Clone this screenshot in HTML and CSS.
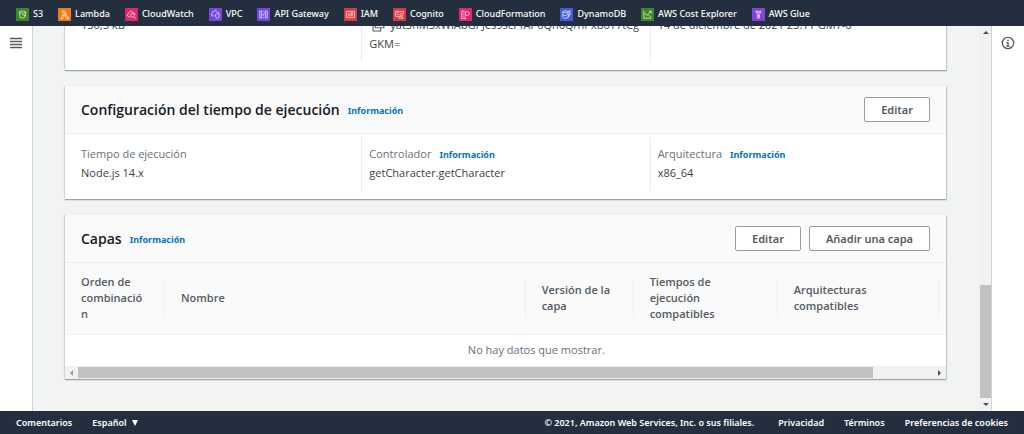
FILE: index.html
```html
<!DOCTYPE html>
<html lang="es">
<head>
<meta charset="utf-8">
<title>Lambda - Configuración</title>
<link rel="stylesheet" href="styles.css">
</head>
<body>
<nav class="topbar" aria-label="Favoritos">
  <a class="fav" href="#"><svg class="fav-icon green" viewBox="0 0 24 24"><path d="M5 7c0-3 14-3 14 0s-14 3-14 0l2 11c1 2 9 2 10 0l2-11M11 12l8 3"/></svg>S3</a>
  <a class="fav" href="#"><svg class="fav-icon orange" viewBox="0 0 24 24"><path d="M7 4h5l6 14h3v3h-5L11 9H8zM9 12l2 4-3 5H4z"/></svg>Lambda</a>
  <a class="fav" href="#"><svg class="fav-icon pink" viewBox="0 0 24 24"><path d="M9 17H6c-4-1-4-6 0-7 0-6 8-7 10-1 3 0 4 2 4 4M18 17l3 4"/><circle cx="14" cy="14" r="4"/></svg>CloudWatch</a>
  <a class="fav" href="#"><svg class="fav-icon purple" viewBox="0 0 24 24"><path d="M9 15H6c-4-1-4-6 0-7 1-6 8-5 10-1 3 0 4 2 4 4M12 12l4-2 4 2c0 5-1 7-4 9-3-2-4-4-4-9z"/></svg>VPC</a>
  <a class="fav" href="#"><svg class="fav-icon purple" viewBox="0 0 24 24"><path d="M4 5l4-1v16l-4-1zM20 5l-4-1v16l4-1zM11 5h2M11 19h2M10 15l4-6"/></svg>API Gateway</a>
  <a class="fav" href="#"><svg class="fav-icon red" viewBox="0 0 24 24"><path d="M3 5h18v14H3zM6 9h4M6 12h4M6 15h12M13 8h4v4h-4z"/></svg>IAM</a>
  <a class="fav" href="#"><svg class="fav-icon red" viewBox="0 0 24 24"><path d="M13 16H3V5h18v5M6 8h5M6 12h4"/><circle cx="16" cy="12" r="3"/><path d="M11 20c0-5 9-5 9 0z"/></svg>Cognito</a>
  <a class="fav" href="#"><svg class="fav-icon pink" viewBox="0 0 24 24"><path d="M10 4H4v17h8v-4M7 8h3M7 12h3M7 16h3M12 6h4c6 0 6 8 0 8h-4z"/></svg>CloudFormation</a>
  <a class="fav" href="#"><svg class="fav-icon blue" viewBox="0 0 24 24"><path d="M4 6c0-3 11-3 11 0s-11 3-11 0v12c0 3 11 3 11 0M4 12c0 2 6 3 9 2M17 4l-3 8h3l-2 7 6-9h-3l2-6z"/></svg>DynamoDB</a>
  <a class="fav" href="#"><svg class="fav-icon green" viewBox="0 0 24 24"><path d="M4 4v16h16M6 8l5 6 4-5 5-4M14 13l6 6M15 5h5v5"/></svg>AWS Cost Explorer</a>
  <a class="fav" href="#"><svg class="fav-icon violet" viewBox="0 0 24 24"><path d="M6 5h12l-4 7v8h-4v-8zM9 8h6M12 12v6"/></svg>AWS Glue</a>
</nav>

<div class="workspace">
  <aside class="rail">
    <button class="icon-button" aria-label="Abrir navegación"><svg viewBox="0 0 14 14"><path d="M1 2.500h12M1 5.500h12M1 8.500h12M1 11.500h12"/></svg></button>
  </aside>
  <main class="content">
    <section class="card">
      <div class="columns">
        <div class="col">130,5 kB</div>
        <div class="col hash"><svg class="copy" viewBox="0 0 12 12"><path d="M3 1h8v7H3zM3 4H1v7h7V8"/></svg>yat5nM5xWiAbGPJes9scPfAP0Qn6Q/nPxb0Y7tCgGKM=</div>
        <div class="col">14 de diciembre de 2021 23:11 GMT-6</div>
      </div>
    </section>

    <section class="card">
      <header class="card-head">
        <h2>Configuración del tiempo de ejecución</h2><a class="info" href="#">Información</a>
        <div class="actions"><button class="btn">Editar</button></div>
      </header>
      <div class="columns">
        <div class="col"><div class="label">Tiempo de ejecución</div><div>Node.js 14.x</div></div>
        <div class="col"><div class="label">Controlador<a class="info" href="#">Información</a></div><div>getCharacter.getCharacter</div></div>
        <div class="col"><div class="label">Arquitectura<a class="info" href="#">Información</a></div><div>x86_64</div></div>
      </div>
    </section>

    <section class="card">
      <header class="card-head">
        <h2>Capas</h2><a class="info" href="#">Información</a>
        <div class="actions"><button class="btn">Editar</button><button class="btn">Añadir una capa</button></div>
      </header>
      <div class="table-wrap">
        <table class="layers">
          <colgroup><col class="c-order"><col><col class="c-version"><col class="c-wide"><col class="c-arch"></colgroup>
          <thead><tr>
            <th><div>Orden de combinación</div></th>
            <th><div>Nombre</div></th>
            <th><div>Versión de la capa</div></th>
            <th><div>Tiempos de ejecución compatibles</div></th>
            <th><div class="arch">Arquitecturas compatibles</div></th>
          </tr></thead>
          <tbody><tr><td colspan="5">No hay datos que mostrar.</td></tr></tbody>
        </table>
      </div>
      <div class="hscroll"><span class="arrow left"></span><span class="track"><span class="thumb"></span></span><span class="arrow right"></span></div>
    </section>
  </main>
  <div class="vscroll"><span class="arrow up"></span><span class="vtrack"></span><span class="vthumb"></span><span class="arrow down"></span></div>
  <aside class="rail right-rail">
    <button class="icon-button" aria-label="Información"><svg viewBox="0 0 16 16"><circle cx="8" cy="8" r="6.500"/><path d="M6 7.500h2v4M6 11.500h4M7 5h2"/></svg></button>
  </aside>
</div>

<footer class="footer">
  <a href="#">Comentarios</a>
  <button class="lang">Español <span class="caret"></span></button>
  <span class="copyright">© 2021, Amazon Web Services, Inc. o sus filiales.</span>
  <a href="#">Privacidad</a>
  <a href="#">Términos</a>
  <a href="#">Preferencias de cookies</a>
</footer>
</body>
</html>
```
FILE: styles.css
```css
* { box-sizing: border-box; }
body {
  margin: 0;
  height: 100vh;
  display: flex;
  flex-direction: column;
  overflow: hidden;
  font: 11px/16px "Open Sans", "Noto Sans", sans-serif;
  color: #3a3f45;
  background: #f2f3f3;
}
a { text-decoration: none; }
button { font: inherit; cursor: pointer; }

.topbar {
  display: flex;
  align-items: center;
  gap: 15px;
  height: 26px;
  padding: 2px 16px 0;
  flex: none;
  background: #232f3e;
}
.fav {
  display: flex;
  align-items: center;
  gap: 4px;
  color: #fff;
  font-family: "Noto Sans", sans-serif;
  font-size: 9px;
  font-weight: 500;
  white-space: nowrap;
}
.fav-icon {
  width: 13px;
  height: 13px;
  padding: 1px;
  fill: none;
  stroke: #fff;
  stroke-width: 1.5;
}
.green { background: #3f8624; }
.orange { background: #ed7d13; }
.pink { background: #e0266f; }
.purple { background: #7448df; }
.violet { background: #8045dd; }
.red { background: #df3340; }
.blue { background: #405de0; }

.workspace { flex: 1; min-height: 0; display: flex; }
.rail {
  width: 33px;
  flex: none;
  padding: 9px 0 0 8px;
  background: #fff;
  border-right: 1px solid #d0d4d6;
}
.right-rail { border-right: 0; border-left: 1px solid #d0d4d6; }
.icon-button {
  display: block;
  width: 16px;
  height: 16px;
  padding: 1px;
  border: 0;
  background: none;
}
.icon-button svg { display: block; width: 14px; height: 14px; fill: none; stroke: #545b64; stroke-width: 1.5; }

.content {
  flex: 1;
  min-width: 0;
  display: flex;
  flex-direction: column;
  justify-content: flex-end;
  gap: 16px;
  padding: 0 33px 32px 32px;
  overflow: hidden;
}
.card {
  flex: none;
  background: #fff;
  box-shadow: 0 1px 1px #9aa5a8, 1px 1px 1px #c8cdd0, -1px 0 1px #d8dcde;
}
.card-head {
  display: flex;
  align-items: center;
  padding: 11px 16px;
  background: #fafafa;
  border-bottom: 1px solid #eaeded;
}
h2 { margin: 0; font-size: 14px; font-weight: 600; line-height: 24px; color: #16191f; }
.info { margin-left: 8px; font: 700 9px/12px "Noto Sans", sans-serif; color: #0073bb; }
.card-head .info { padding-top: 3px; }
.actions { display: flex; gap: 8px; margin-left: auto; }
.btn {
  height: 25px;
  padding: 0 16px;
  border: 1px solid #989da3;
  border-radius: 2px;
  background: #fff;
  color: #545b64;
  font-family: "Noto Sans", sans-serif;
  font-weight: 600;
}

.columns { display: grid; grid-template-columns: repeat(3, 1fr); padding: 3px 8px 8px; }
.col { padding: 7px 8px 9px 7px; line-height: 19px; border-left: 1px solid #eaeded; }
.col:first-child { border-left-color: transparent; }
.label { color: #687078; }
.hash { word-break: break-all; }
.copy { width: 13px; height: 13px; margin: 0 5px 0 3px; fill: none; stroke: #545b64; vertical-align: -3px; }

.table-wrap { overflow: hidden; }
.layers { width: 107%; table-layout: fixed; border-collapse: collapse; }
.c-order { width: 100px; }
.c-version { width: 108px; }
.c-wide { width: 144px; }
.c-arch { width: 230px; }
th { padding: 0; height: 71px; background: #fafafa; text-align: left; font-weight: 600; color: #545b64; border-bottom: 1px solid #f2f3f3; }
th div {
  display: flex;
  align-items: center;
  height: 40px;
  padding: 0 16px;
  border-right: 1px solid #eff1f1;
  overflow-wrap: anywhere;
}
th:first-child div { padding-right: 20px; }
.arch { width: 161px; }
td { height: 32px; padding: 0; text-align: center; color: #687078; }

.hscroll { display: flex; height: 13px; background: #f1f1f1; }
.track { flex: 1; display: flex; padding: 1px 0; }
.thumb { width: 93%; background: #c1c1c1; }
.vscroll { display: flex; flex-direction: column; width: 12px; flex: none; background: #f1f1f1; }
.vtrack { flex: 247; }
.vthumb { flex: 113; margin: 0 0 0 1px; background: #c1c1c1; }
.arrow { flex: none; width: 13px; height: 13px; display: grid; place-items: center; }
.arrow::before { content: ""; border: 3px solid transparent; }
.left::before { border-right-color: #999; border-left: 0; }
.right::before { border-left-color: #505050; border-right: 0; }
.up::before { border-bottom-color: #505050; border-top: 0; }
.down::before { border-top-color: #505050; border-bottom: 0; }

.footer {
  display: flex;
  align-items: center;
  gap: 20px;
  height: 23px;
  padding: 0 16px;
  flex: none;
  background: #232f3e;
  color: #fff;
  font-family: "Noto Sans", sans-serif;
  font-size: 9px;
  font-weight: 600;
}
.footer a { color: inherit; }
.lang { display: flex; align-items: center; gap: 5px; padding: 0; border: 0; background: none; color: inherit; }
.caret { border: 3px solid transparent; border-top: 6px solid #fff; border-bottom: 0; }
.copyright { margin: 0 4px 0 auto; }
```
